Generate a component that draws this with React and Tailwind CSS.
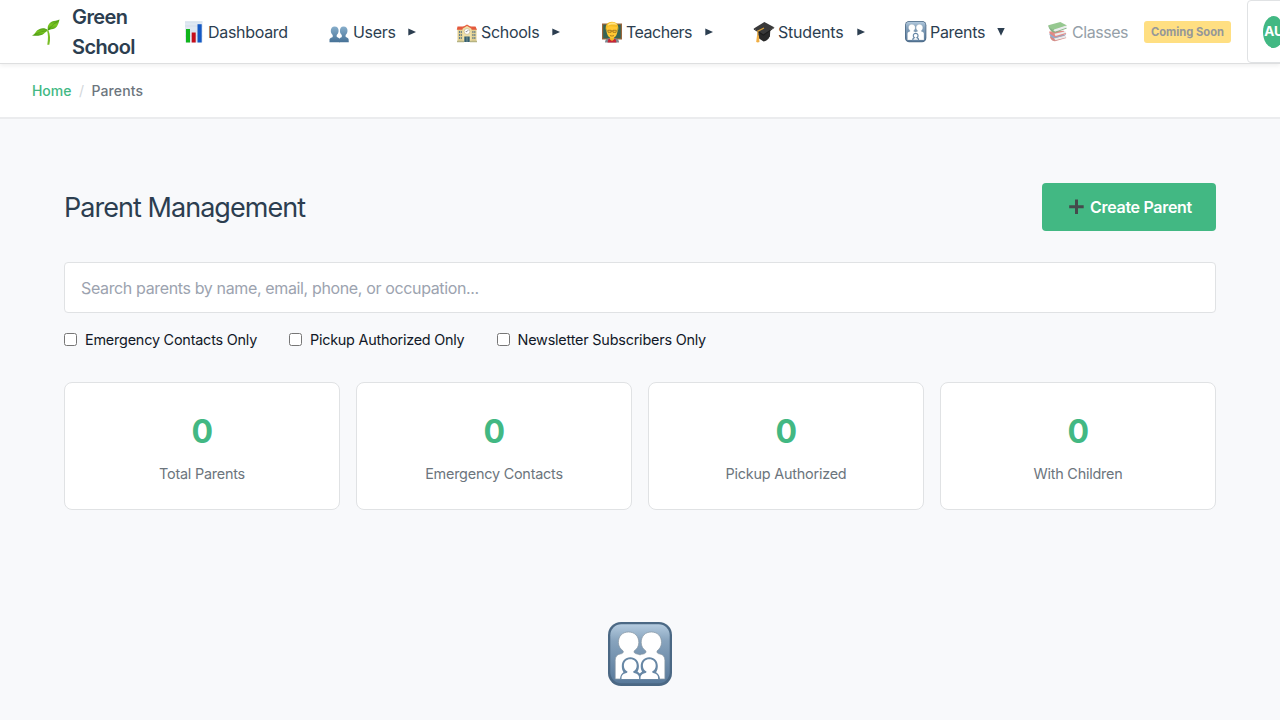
import React from "react";

function Sprout() {
  return (
    <svg className="h-7 w-7 shrink-0" viewBox="0 0 28 28">
      <defs>
        <linearGradient id="leaf" x1="0" y1="0" x2="0" y2="1">
          <stop offset="0" stopColor="#4c9a16" />
          <stop offset=".5" stopColor="#7cc822" />
          <stop offset="1" stopColor="#4b9c12" />
        </linearGradient>
      </defs>
      <path d="M15 12.500c1.200 4 1.300 8 .3 14.200h2c1.400-5.500.8-10.500-.8-14.200z" fill="#79bd25" />
      <path d="M16.200 12c-4.200-3.200-8.700-1.800-11.200.6-1.600 1.600-2.200 3.800-5 4.900 4.700.8 9.300.2 11.800-1.800 1.500-1.300 2.700-2.300 4.400-3.700z" fill="url(#leaf)" />
      <path d="M16 12.500c-1-4.300.8-7.300 4-8.900 2.500-1.200 4.800-.7 7.500-2.200-.7 3.300-1.800 7.200-4.500 8.800-2.700 1.500-4.500.5-7 2.300z" fill="url(#leaf)" />
      <path d="M3 16.500c3-2 6.500-3.200 11.500-3.500M16.500 12c2-3.500 5-6 9-8.500" stroke="#38790d" strokeWidth=".4" fill="none" />
    </svg>
  );
}

function ChartIcon() {
  return (
    <svg className="h-[22px] w-[22px] shrink-0" viewBox="0 0 22 22">
      <path fill="#dfe8f2" d="M2 .5h17.500v21H2z" />
      <path stroke="#c5d2df" strokeWidth=".5" d="M2 5h17.500M2 10h17.500M2 15h17.500M2 .8h17.500" />
      <path fill="#10b51c" d="M3 8h4v13.500H3z" />
      <path fill="#c50d1b" d="M8.700 11.500h4v10h-4z" />
      <path fill="#1459c4" d="M14.500 3.200h4.200v18.300h-4.200z" />
    </svg>
  );
}

function UsersIcon() {
  return (
    <svg className="h-[22px] w-[22px] shrink-0" viewBox="0 0 22 22">
      <defs>
        <linearGradient id="people" x1="0" y1="0" x2="0" y2="1">
          <stop offset="0" stopColor="#87aecb" />
          <stop offset="1" stopColor="#477297" />
        </linearGradient>
      </defs>
      <g fill="url(#people)">
        <path d="M15.500 5.500c2.700 0 4.200 2 4 4.600-.1 2-1 3.300-1.900 4v1.700c.9.900 2.600.8 3 2.500l.2 2.900H11v-3c.5-1.600 1.900-1.500 2.800-2.300V14c-1-.9-1.900-2.200-1.900-4 0-2.700 1.100-4.500 3.600-4.500z" />
        <path d="M6.600 5.500c2.700 0 4.200 2 4 4.600-.1 2-1 3.300-1.900 4v1.700c.9.900 2.500.8 2.900 2.500l.2 2.900H1.500v-3c.5-1.600 2.300-1.500 3.200-2.300V14c-1-.9-1.900-2.200-1.900-4 0-2.700 1.300-4.500 3.800-4.500z" />
      </g>
    </svg>
  );
}

function SchoolIcon() {
  return (
    <svg className="h-[22px] w-[22px] shrink-0" viewBox="0 0 22 22">
      <path fill="#e1cf91" d="M1.500 8h19v12h-19z" />
      <path fill="#e4593c" d="M1.500 5.500h18l1.500 3.200H.8z" />
      <path fill="#efe0a7" d="M6.500 7 11 4.500 15.500 7v14h-9z" />
      <path d="M5.800 7.400 11 4.300l5.200 3.100" fill="none" stroke="#e66342" strokeWidth="1.300" />
      <circle cx="11" cy="10.500" r="2.900" fill="#fff" stroke="#b8a87b" strokeWidth=".6" />
      <path d="M11 10.600 12.300 9M11 10.600H9.700" stroke="#555" strokeWidth=".6" />
      <path d="M3.500 10v9M5.300 10v9M16.900 10v9M18.800 10v9" stroke="#657f8a" strokeWidth="1.100" strokeDasharray="2 1" />
      <path fill="#345f73" d="M8.300 15.500h5.400V21H8.300z" />
      <path d="M11 15.500V21" stroke="#a8b7a3" strokeWidth=".6" />
      <path fill="#b5b383" d="M1 19.800h7v1.400H1zM14 19.800h7v1.400h-7z" />
    </svg>
  );
}

function TeacherIcon() {
  return (
    <svg className="h-[22px] w-[22px] shrink-0" viewBox="0 0 22 22">
      <path fill="#9b673d" d="M1 2.500h20v16H1z" />
      <path fill="#376454" d="M2.200 3.700h17.600v13.600H2.200z" />
      <path fill="#7d8991" d="M4 21.500c0-3 2.200-4 5-4.500h4c3 .5 5 1.500 5 4.500z" />
      <path fill="#c92535" d="M7.500 18h7l1 3.500h-9z" />
      <path fill="#f0b725" d="M9 15h4v3.600L11 20l-2-1.400z" />
      <path fill="#ffc832" d="M5.300 7.500C5.300 4 7.800 2 11 2s5.700 2 5.700 5.500c0 6-2.500 9.800-5.700 9.800S5.300 13.500 5.300 7.500z" />
      <path fill="#f3bd25" d="M4.800 9C4.200 3.500 6.800.8 11 .8s7 2.700 6.300 8.200l-1.500-3.100c-4-.2-6.500-.8-8.300-.4C6.300 6 6 7.500 4.800 9z" />
      <path fill="#ffe484" d="M6.500 5C7.500 2.200 9 1.500 12 1.600c2 .2 3 1 4 2.400-4-.8-7-.5-9.500 1z" />
      <path d="M6.800 9.300h3.300v2H7zM12 9.300h3.300l-.2 2H12zM10 10h2M9 14.500c1.400.7 2.700.7 4 0" fill="none" stroke="#8c6218" strokeWidth=".7" />
    </svg>
  );
}

function CapIcon() {
  return (
    <svg className="h-[22px] w-[22px] shrink-0" viewBox="0 0 22 22">
      <path fill="#292929" d="M5 8.500 17.500 7l-.6 8.200c-1.200 3-4 5-6.300 5.300L5.300 17z" />
      <path fill="#393939" d="M11.300 1 21.200 6.200 10.400 13.500.8 7.500z" />
      <path fill="#1b1b1b" d="m.8 7.500 9.600 6L21.200 6.200v.9L10.400 14.700.8 8.400z" />
      <path d="M11 7 4.800 10.200v5.300" fill="none" stroke="#d99f3a" strokeWidth="1.200" />
      <path fill="#f0ae43" d="M4 14.500h1.900l.6 6.500c-1.200.7-2.300.6-3.300 0z" />
    </svg>
  );
}

function BooksIcon() {
  return (
    <svg className="h-[22px] w-[22px] shrink-0 opacity-60" viewBox="0 0 22 22">
      <path fill="#b9433b" d="m3 15.300 14-2 2.300 3.800L8 20.200c-3 .2-5-2.500-5-4.900z" />
      <path fill="#dcdedf" d="m7 17.200 11.500-2.700.5 2-10.700 2.800z" />
      <path fill="#cf3c34" d="m2.200 10.500 14.500-.8 2.700 3.200L8 16c-3.200.2-5.700-2.700-5.800-5.500z" />
      <path fill="#4875af" d="m2.300 12.500 6 3.700 10.700-3v.8L8 17.200c-3.300 0-5.400-2.200-5.700-4.700z" />
      <path fill="#dfe1e3" d="m7.500 12.700 11.200-2.500V12L8.500 15z" />
      <path fill="#52a447" d="m1.300 4.300 12-3.300L20 4.500 7.700 9.300C4 8.800 1.500 6.800 1.300 4.300z" />
      <path fill="#dfe1e3" d="m7 8.400 12.500-3.800v2.200L8 11z" />
      <path fill="#368235" d="M1.300 4.300c.3 3.700 3.100 7 6.700 7.500l11.800-4.300-.5-.8L8 10.700C6.500 10.500 6.300 9.500 7 8.800 4 8.200 2 6.500 1.300 4.300z" />
    </svg>
  );
}

function FamilyIcon({ large }) {
  return (
    <svg className={large ? "h-16 w-16" : "h-[22px] w-[22px] shrink-0"} viewBox={large ? "0 0 64 64" : "0 0 66 66"}>
      <defs>
        <linearGradient id={large ? "tileLarge" : "tile"} x1="0" y1="0" x2="0" y2="1">
          <stop offset="0" stopColor="#b4cbdf" />
          <stop offset=".28" stopColor="#87a3bd" />
          <stop offset="1" stopColor="#58799a" />
        </linearGradient>
      </defs>
      <rect x="0" y="0" width="64" height="64" rx="13" fill="#4b6884" />
      <rect x="2.300" y="2.300" width="59.400" height="59" rx="11" fill={large ? "url(#tileLarge)" : "url(#tile)"} />
      <g fill="#fff" stroke="#8595a2" strokeWidth=".7">
        <path d="M7.200 57V38.500c0-4 2-6 5-6.500 2.600-.4 3.200-1.300 3-3-3-2.200-4.800-5-4.800-8.500 0-6.500 4.100-10.500 10.100-10.500s10.300 4 10.300 10.500c0 3.500-1.600 6.500-4.700 8.500-.2 1.700.6 2.600 3 3 1.500.2 2.500.6 2.900 1.100.6-.6 1.600-1 3.200-1.100 2.200-.3 3-1.500 2.700-3-3-2-4.700-5-4.700-8.500C33.200 14 37.300 10 43.300 10s10.200 4 10.200 10.500c0 3.500-1.700 6.300-4.500 8.500-.1 1.700.3 2.600 2.900 3 3 .5 5 2.500 5 6.500V57z" />
      </g>
      {large ? (
        <g>
          <path fill="#6787a5" d="M12 57.500c0-4 1.500-6 3.500-7.300-1.200-1.700-1.700-3.700-1.700-6.200 0-5 3.500-8.800 8.500-8.800s8.600 3.800 8.600 8.800c0 2-.3 4-1.400 5.500l2.300 2 2.300-2c-1.100-1.500-1.400-3.500-1.400-5.500 0-5 3.600-8.800 8.600-8.800s8.500 3.800 8.500 8.800c0 2.500-.5 4.500-1.700 6.200 2 1.300 3.900 3.300 3.900 7.300z" />
          <path id="child" fill="#fff" d="M13.500 57c-.3-3.300 1-5.200 4-5.800 1.700-.3 2.200-.8 1.900-1.700-2.200-1.200-3.500-3.100-3.500-5.700 0-3.900 2.500-6.500 6.400-6.500s6.400 2.600 6.400 6.500c0 2.600-1.300 4.500-3.500 5.700-.3.900.3 1.400 1.900 1.700 3 .6 4.300 2.500 4 5.800z" />
          <use href="#child" x="19" />
        </g>
      ) : (
        <path d="M23 58c0-5 1-7 5-8-6-5-3-13 4-13s10 8 4 13c4 1 5 3 5 8z" fill="#fff" stroke="#6585a4" strokeWidth="3.500" />
      )}
    </svg>
  );
}

function Plus() {
  return (
    <svg className="h-4 w-4 shrink-0" viewBox="0 0 16 16">
      <path d="M7 .5h3v5.800h5.700v2.900H10V15H7V9.200H1.200V6.300H7z" fill="#454a4c" />
    </svg>
  );
}

function Arrow({ down }) {
  return (
    <svg className="h-2 w-2" viewBox="0 0 8 8">
      <path d={down ? "M.3 0h7.400L4 7.800z" : "M.3.500v7L8 4z"} fill="#2c3e50" />
    </svg>
  );
}

const items = [
  { label: "Dashboard", Icon: ChartIcon, box: "w-[145px]", text: "w-[80px] tracking-[-0.3px]" },
  { label: "Users", Icon: UsersIcon, box: "w-[128px]", text: "w-[43px] tracking-[-0.3px]", arrow: "ml-3" },
  { label: "Schools", Icon: SchoolIcon, box: "w-[145px]", text: "w-[59px] tracking-[-0.3px]", arrow: "ml-3" },
  { label: "Teachers", Icon: TeacherIcon, box: "w-[152px]", text: "w-[67px] tracking-[-0.5px]", arrow: "ml-3" },
  { label: "Students", Icon: CapIcon, box: "w-[152px]", text: "w-[67px] tracking-[-0.2px]", arrow: "ml-3" },
  { label: "Parents", Icon: FamilyIcon, box: "w-[142px]", text: "w-[55px] tracking-[-0.3px]", arrow: "ml-3", open: true },
];

const filters = [
  { label: "Emergency Contacts Only", box: "w-[225px]", text: "" },
  { label: "Pickup Authorized Only", box: "w-[207.500px]", text: "tracking-[-0.24px]" },
  { label: "Newsletter Subscribers Only", box: "", text: "" },
];

const stats = ["Total Parents", "Emergency Contacts", "Pickup Authorized", "With Children"];

export default function App() {
  return (
    <div className="h-[720px] w-[1280px] overflow-hidden bg-[#f8f9fb] font-['Inter',sans-serif] text-[#2c3e50]">
      <header className="relative flex h-16 items-center overflow-hidden border-b border-[#dedfe0] bg-white pl-8 shadow-[0_2px_4px_rgba(0,0,0,0.06)]">
        <div className="flex w-[151px] shrink-0 items-center gap-3">
          <Sprout />
          <div className="w-20 text-xl leading-[30px] font-semibold tracking-[-0.6px]">Green School</div>
        </div>
        <nav className="flex shrink-0 items-center">
          {items.map(({ label, Icon, box, text, arrow, open }) => (
            <div key={label} className={`flex shrink-0 items-center ${box}`}>
              <Icon />
              <span className={`ml-[3px] shrink-0 text-base leading-6 whitespace-nowrap ${text}`}>{label}</span>
              {arrow && <span className={arrow}><Arrow down={open} /></span>}
            </div>
          ))}
          <div className="flex w-[200px] shrink-0 items-center">
            <BooksIcon />
            <span className="ml-[3px] w-[56px] shrink-0 text-base tracking-[-0.45px] text-[#959fa8]">Classes</span>
            <span className="ml-4 flex h-[22px] w-[87px] shrink-0 items-center justify-center rounded-[3px] bg-[#ffdf82] pt-px text-[11.200px] font-bold whitespace-nowrap text-[#959799]">Coming Soon</span>
          </div>
          <div className="flex h-[63px] w-[60px] shrink-0 items-center rounded border border-[#e0e2e4] pl-[15px]">
            <div className="flex h-8 w-[21px] shrink-0 items-center justify-center rounded-[50%] bg-[#42b883] pl-px text-[13.500px] font-bold text-white">AU</div>
          </div>
        </nav>
      </header>
      <div className="flex h-[55px] items-center border-b-2 border-[#ebecee] bg-white px-8 text-sm font-medium">
        <span className="w-[40px] tracking-[-0.05px] text-[#42b883]">Home</span>
        <span className="w-[19.500px] pl-[7px] font-normal text-[#d2d6da]">/</span>
        <span className="tracking-[0.1px] text-[#6c757d]">Parents</span>
      </div>
      <main className="px-16 pt-[63px]">
        <div className="flex h-[49px] items-center justify-between">
          <h1 className="pt-0.5 text-[27px] leading-10 font-normal tracking-[-0.96px]">Parent Management</h1>
          <button className="flex h-12 w-[174px] items-center rounded bg-[#42b883] pl-[26px] text-base font-semibold whitespace-nowrap text-white">
            <Plus />
            <span className="ml-[6px] tracking-[-0.3px]">Create Parent</span>
          </button>
        </div>
        <input
          type="text"
          placeholder="Search parents by name, email, phone, or occupation..."
          className="mt-[31px] block h-[51px] w-full rounded border border-[#e0e2e4] bg-white px-4 pt-px text-base tracking-[-0.36px] placeholder:text-[#9ca3af]"
        />
        <div className="mt-[15px] flex h-6 items-center text-[14.400px] tracking-[-0.2px] text-[#111827]">
          {filters.map(({ label, box, text }) => (
            <label key={label} className={`flex shrink-0 items-center gap-2 whitespace-nowrap ${box}`}>
              <input type="checkbox" className="h-[13px] w-[13px] shrink-0" />
              <span className={text}>{label}</span>
            </label>
          ))}
        </div>
        <div className="mt-[30px] grid grid-cols-4 gap-4">
          {stats.map((label) => (
            <div key={label} className="flex h-32 flex-col items-center rounded-lg border border-[#e0e2e4] bg-white pt-[23px]">
              <div className="text-[32px] leading-[51px] font-bold tracking-[-0.8px] text-[#42b883]">0</div>
              <div className="mt-[5px] text-[14.400px] leading-[23px] tracking-[-0.21px] text-[#6c757d]">{label}</div>
            </div>
          ))}
        </div>
        <div className="mt-28 flex justify-center">
          <FamilyIcon large />
        </div>
      </main>
    </div>
  );
}
